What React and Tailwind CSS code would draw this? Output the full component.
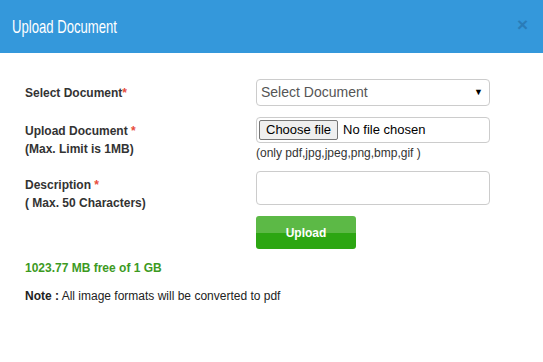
export default function App() {
  const label = "text-[12px] font-bold leading-[18px] text-[#333]";
  return (
    <div className="w-[543px] h-[362px] bg-white font-['Liberation_Sans',Arial,sans-serif]">
      <div className="h-[53px] bg-[#3498db] flex items-center justify-between pl-[12px] pr-[15px]">
        <h1 className="text-[19px] text-white font-['Liberation_Sans',sans-serif] origin-left scale-x-[0.69] whitespace-nowrap mt-[1px]">
          Upload Document
        </h1>
        <span className="text-[#2a7cb8] text-[19px] font-bold leading-none mb-[5px]">×</span>
      </div>

      <div className="px-[25px] pt-[26px]">
        <div className="flex items-center">
          <div className={`w-[231px] ${label}`}>
            Select Document<span className="text-[#e74c3c]">*</span>
          </div>
          <div className="w-[234px] h-[27px] border border-[#ccc] rounded-[4px] flex items-center justify-between pl-[4px] pr-[6px]">
            <span className="text-[14px] text-[#555]">Select Document</span>
            <span className="text-[9px] text-black">▼</span>
          </div>
        </div>

        <div className="flex mt-[11px]">
          <div className={`w-[231px] pt-[5px] ${label}`}>
            <div>
              Upload Document <span className="text-[#e74c3c]">*</span>
            </div>
            <div>(Max. Limit is 1MB)</div>
          </div>
          <div className="w-[234px]">
            <div className="h-[26px] border border-[#ccc] rounded-[4px] flex items-center pl-[2px] gap-[5px]">
              <span className="h-[20px] px-[6px] border border-[#767676] rounded-[2px] bg-[#efefef] text-[13px] leading-[18px] text-black">
                Choose file
              </span>
              <span className="text-[13px] text-black">No file chosen</span>
            </div>
            <div className="mt-[2px] text-[12px] leading-[16px] text-[#333]">(only pdf,jpg,jpeg,png,bmp,gif )</div>
          </div>
        </div>

        <div className="flex mt-[10px]">
          <div className={`w-[231px] pt-[5px] ${label}`}>
            <div>
              Description <span className="text-[#e74c3c]">*</span>
            </div>
            <div>( Max. 50 Characters)</div>
          </div>
          <div className="w-[234px]">
            <div className="h-[34px] border border-[#ccc] rounded-[4px]"></div>
            <button className="mt-[11px] w-[100px] h-[33px] rounded-[3px] bg-[linear-gradient(#5cb946_0%,#5cb946_50%,#2ca612_50%,#2ca612_100%)] text-white text-[12px] font-bold">
              Upload
            </button>
          </div>
        </div>

        <div className="mt-[10px] text-[12px] font-bold leading-[18px] text-[#3d9a1f]">1023.77 MB free of 1 GB</div>
        <div className="mt-[10px] text-[12px] leading-[18px] text-[#222]">
          <span className="font-bold">Note :</span> All image formats will be converted to pdf
        </div>
      </div>
    </div>
  );
}
